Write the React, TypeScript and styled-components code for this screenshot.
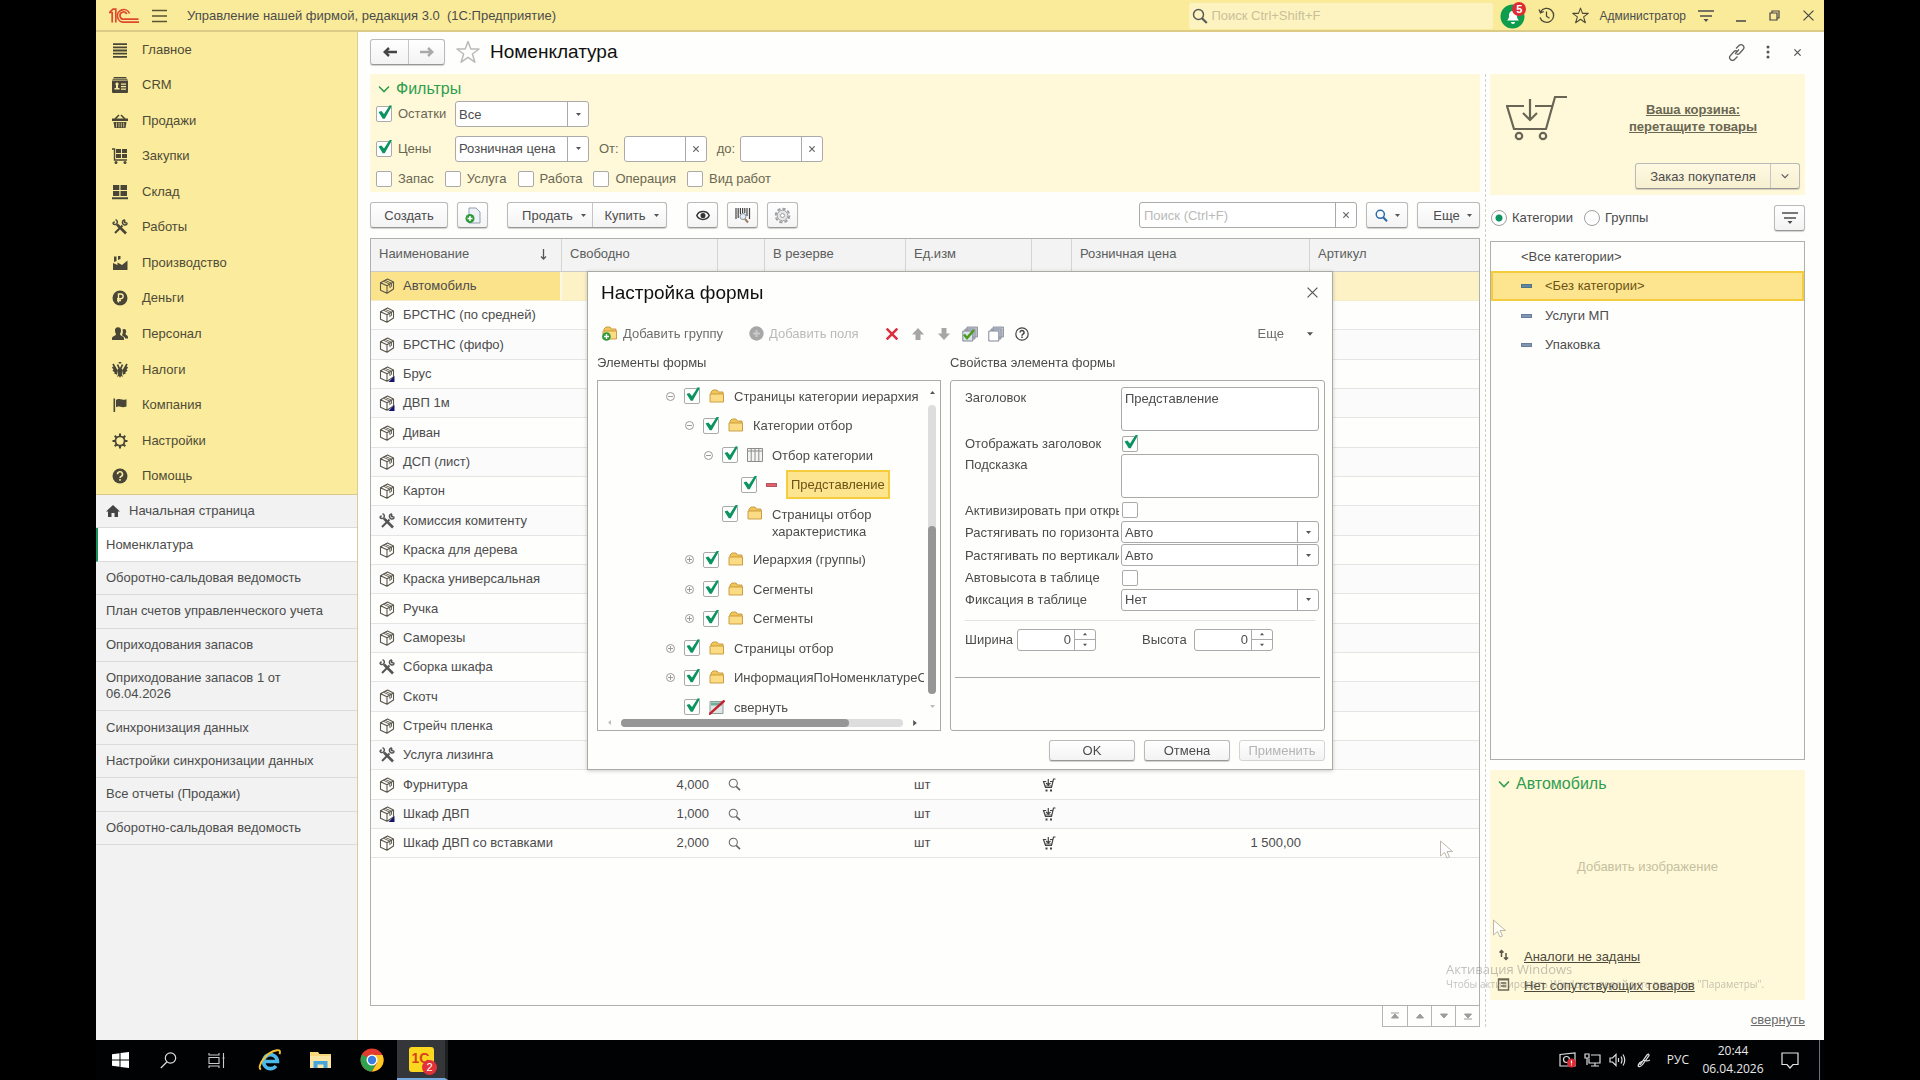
import React from 'react';
import styled, { createGlobalStyle, css } from 'styled-components';

const GlobalStyle = createGlobalStyle`
  *, *::before, *::after { box-sizing: border-box; }
  html, body { margin: 0; background: #000; }
  body, button, input, select, textarea {
    font-family: "Liberation Sans", Arial, sans-serif;
    font-size: 13px;
    color: #4c4c4c;
  }
  svg { display: block; flex: none; }
`;

/* ---------- shell ---------- */

const Screen = styled.div`
  min-height: 100vh;
  padding: 0 5%;
  background: #000;
  display: flex;
  flex-direction: column;
  line-height: 16px;
`;

const TitleBar = styled.header`
  height: 32px;
  display: flex;
  align-items: center;
  background: #faeb9a;
  border-bottom: 2px solid #dccb86;
  padding: 1px 10px 0 13px;
`;

const PlainButton = styled.button`
  border: 0;
  padding: 0;
  background: transparent;
  display: inline-flex;
  align-items: center;
  justify-content: center;
`;

const BurgerButton = styled(PlainButton)`
  margin: 0 20px 0 13px;
`;

const AppTitle = styled.div`
  flex: 1;
  white-space: pre;
`;

const GlobalSearch = styled.label`
  width: 304px;
  height: 26px;
  display: flex;
  align-items: center;
  gap: 3px;
  padding-left: 3px;
  background: #fdf3c0;
  border-radius: 3px;
  input {
    flex: 1;
    min-width: 0;
    border: 0;
    padding: 0;
    background: transparent;
    outline: 0;
  }
  input::placeholder { color: #c9c09a; }
`;

const TitleActions = styled.div`
  display: flex;
  align-items: center;
  margin-left: 6px;
`;

const BellButton = styled(PlainButton)`
  position: relative;
  width: 27px;
  height: 28px;
`;

const BellBadge = styled.span`
  position: absolute;
  top: 0;
  right: 0;
  width: 14px;
  height: 14px;
  border-radius: 50%;
  background: #dd2c33;
  color: #fff;
  font-size: 11px;
  font-weight: bold;
  line-height: 14px;
  text-align: center;
`;

const UserName = styled.span`
  font-size: 12px;
  margin: 0 12px 0 10px;
`;

const Spaced = styled.span<{ $gap: number }>`
  margin-left: ${p => p.$gap}px;
  display: inline-flex;
`;

const Body = styled.div`
  flex: 1;
  display: flex;
  background: #fefefd;
`;

/* ---------- sidebar ---------- */

const Sidebar = styled.aside`
  width: 262px;
  flex: none;
  display: flex;
  flex-direction: column;
  background: #f1f2f1;
  border-right: 1px solid #dbcb9a;
`;

const Sections = styled.nav`
  height: 463px;
  display: flex;
  flex-direction: column;
  background: #faec9c;
  border-bottom: 1px solid #d9ca8c;
`;

const SectionLink = styled.a`
  flex: 1;
  display: flex;
  align-items: center;
  gap: 14px;
  padding-left: 16px;
  color: #4f4a38;
  text-decoration: none;
`;

const OpenPages = styled.nav`
  height: 350px;
  display: flex;
  flex-direction: column;
`;

const PageLink = styled.a<{ $active?: boolean }>`
  flex: 1 0 auto;
  display: flex;
  align-items: center;
  gap: 9px;
  padding: 8px 60px 8px 10px;
  line-height: 16px;
  color: #4c4c4c;
  text-decoration: none;
  border-bottom: 1px solid #d9dad9;
  ${p => p.$active && css`
    background: #fff;
    padding-left: 8px;
    border-left: 2px solid #16915a;
  `}
  &:not(:nth-child(6)) { white-space: nowrap; padding-right: 0; }
`;

/* ---------- content ---------- */

const Main = styled.main`
  flex: 1;
  min-width: 0;
  display: flex;
  flex-direction: column;
  padding: 0 19px 13px 12px;
`;

const PageHeader = styled.div`
  height: 42px;
  padding-bottom: 2px;
  display: flex;
  align-items: center;
`;

const raised = css`
  border: 1px solid #b9bab9;
  border-bottom-color: #969896;
  border-radius: 3px;
  background: linear-gradient(#ffffff, #f3f3f3);
  box-shadow: 0 1px 1px rgba(0, 0, 0, 0.18);
`;

const SplitGroup = styled.div`
  ${raised}
  display: flex;
  height: 26px;
  > * + * { border-left: 1px solid #c4c5c4; }
`;

const SplitButton = styled(PlainButton)<{ $width: number; $inset?: number }>`
  width: ${p => p.$width}px;
  padding-left: ${p => p.$inset ?? 0}px;
  gap: 8px;
`;

const PageTitle = styled.h1`
  flex: 1;
  margin: 0 0 0 10px;
  font-size: 19px;
  line-height: 24px;
  font-weight: normal;
  color: #111;
`;

const HeaderTools = styled.div`
  display: flex;
  align-items: center;
  gap: 14px;
`;

const Columns = styled.div`
  flex: 1;
  display: flex;
`;

const ListColumn = styled.section`
  flex: 1;
  min-width: 0;
  display: flex;
  flex-direction: column;
`;

const Filters = styled.div`
  min-height: 118px;
  padding: 6px 6px 0;
  background: #fff9da;
  display: flex;
  flex-direction: column;
`;

const GroupTitle = styled(PlainButton)`
  align-self: flex-start;
  gap: 6px;
  height: 18px;
  padding-left: 2px;
  font-size: 16px;
  color: #2f9e4f;
`;

const FilterRow = styled.div<{ $height: number; $gap?: number }>`
  height: ${p => p.$height}px;
  display: flex;
  align-items: center;
  gap: ${p => p.$gap ?? 0}px;
`;

const CheckLabel = styled.label<{ $width?: number }>`
  display: inline-flex;
  align-items: center;
  gap: 6px;
  width: ${p => (p.$width ? `${p.$width}px` : 'auto')};
  color: #6a6752;
`;

const Check = styled.input.attrs({ type: 'checkbox' })`
  appearance: none;
  position: relative;
  flex: none;
  width: 16px;
  height: 16px;
  margin: 0;
  border: 1px solid #a9aaa9;
  border-radius: 2px;
  background: #fff;
  &:checked::after {
    content: '';
    position: absolute;
    left: 1px;
    top: -2px;
    width: 14px;
    height: 14px;
    background: #0b9460;
    clip-path: polygon(4% 50%, 24% 42%, 43% 64%, 84% 2%, 100% 6%, 48% 98%, 34% 98%);
  }
`;

const Field = styled.div<{ $width?: number; $height?: number }>`
  display: flex;
  width: ${p => (p.$width ? `${p.$width}px` : '100%')};
  height: ${p => p.$height ?? 26}px;
  border: 1px solid #a9aaa9;
  border-radius: 3px;
  background: #fff;
  overflow: hidden;
  select, input {
    appearance: none;
    flex: 1;
    min-width: 0;
    border: 0;
    padding: 0 4px;
    background: transparent;
    outline: 0;
  }
  select { padding: 0 3px; }
  input::placeholder { color: #b9bab9; }
`;

const FieldEnd = styled.span`
  width: 21px;
  display: flex;
  align-items: center;
  justify-content: center;
  border-left: 1px solid #a9aaa9;
`;

const FieldClear = styled(PlainButton)`
  width: 21px;
  border-left: 1px solid #a9aaa9;
`;

const RangeLabel = styled.label`
  padding: 0 5px 0 10px;
  color: #6a6752;
`;

const Toolbar = styled.div`
  display: flex;
  align-items: center;
  padding: 10px 0;
`;

const Button = styled.button<{ $width: number; $height?: number; $inset?: number }>`
  ${raised}
  width: ${p => p.$width}px;
  height: ${p => p.$height ?? 26}px;
  padding: 0 0 0 ${p => p.$inset ?? 0}px;
  display: inline-flex;
  align-items: center;
  justify-content: center;
  gap: 7px;
  flex: none;
  &:disabled { color: #b3b4b3; border-color: #d3d4d3; box-shadow: none; }
`;

const Gap = styled.div<{ $size?: number }>`
  ${p => (p.$size ? `width: ${p.$size}px;` : 'flex: 1;')}
`;

const GridBox = styled.div`
  flex: 1;
  border: 1px solid #aeb0ae;
  background: #fefefd;
`;

const Grid = styled.table`
  width: 100%;
  table-layout: fixed;
  border-collapse: separate;
  border-spacing: 0;
  th {
    height: 33px;
    padding: 0 0 2px 8px;
    background: #f2f3f2;
    border-right: 1px solid #d3d5d3;
    border-bottom: 1px solid #c9cbc9;
    text-align: left;
    font-weight: normal;
    color: #5c5d5c;
  }
  th:last-child { border-right: 0; }
  td {
    height: 29px;
    padding: 0 8px;
    border-bottom: 1px solid #e4e6e4;
    white-space: nowrap;
  }
  tbody tr:nth-child(3n) td { height: 30px; }
  tbody tr:nth-child(odd) td { background: #fafbfa; }
  tbody tr:first-child td { background: #fdf1c6; border-bottom-color: #f4eccb; }
  tbody tr:first-child td:first-child { background: #fbe38b; border-right: 2px solid #fef8e0; }
`;

const HeadSort = styled.span`
  display: flex;
  justify-content: space-between;
  align-items: center;
  padding-right: 14px;
`;

const NameCell = styled.span`
  display: flex;
  align-items: center;
  gap: 8px;
`;

const NumberCell = styled.td`
  && { padding-right: 9px; }
  text-align: right;
`;

const IconCell = styled.td`
  && { padding-left: 10px; }
`;

const GridPager = styled.div`
  align-self: flex-end;
  display: flex;
  border: 1px solid #b4b6b4;
  border-top: 0;
  button { width: 24px; height: 20px; }
  button + button { border-left: 1px solid #b4b6b4; }
`;

const Divider = styled.div`
  width: 10px;
  flex: none;
  display: flex;
  justify-content: center;
  &::before { content: ''; border-left: 1px dashed #cfd1cf; }
`;

/* ---------- right column ---------- */

const SideColumn = styled.section`
  width: 315px;
  flex: none;
  display: flex;
  flex-direction: column;
`;

const Basket = styled.div`
  height: 121px;
  padding: 21px 5px 6px 16px;
  background: #fff9da;
  display: grid;
  grid-template-columns: 64px 1fr;
  grid-template-rows: 1fr 26px;
`;

const BasketLink = styled.a`
  justify-self: center;
  padding: 6px 0 0 16px;
  color: #6a6752;
  font-weight: bold;
  line-height: 17px;
  text-align: center;
`;

const BasketOrder = styled(SplitGroup)`
  grid-column: 2;
  justify-self: end;
  background: linear-gradient(#fff9e2, #f6efd0);
`;

const ModeRow = styled.div`
  display: flex;
  align-items: center;
  gap: 10px;
  padding: 10px 0;
`;

const RadioLabel = styled.label`
  display: inline-flex;
  align-items: center;
  gap: 5px;
`;

const Radio = styled.input.attrs({ type: 'radio' })`
  appearance: none;
  width: 16px;
  height: 16px;
  margin: 0 0 0 1px;
  border: 1px solid #9d9f9d;
  border-radius: 50%;
  background: #fff;
  &:checked { background: radial-gradient(circle, #0b9460 0 3px, #fff 4px); }
`;

const CategoryList = styled.ul`
  flex: 1;
  margin: 0 0 10px;
  padding: 0;
  list-style: none;
  border: 1px solid #aeb0ae;
`;

const Category = styled.li<{ $selected?: boolean }>`
  height: 29px;
  display: flex;
  align-items: center;
  gap: 13px;
  padding-left: 30px;
  ${p => p.$selected && css`
    height: 30px;
    padding-left: 28px;
    border: 2px solid #f4cc3c;
    background: #fce58e;
    color: #6b5316;
  `}
`;

const Dash = styled.span<{ $color: string }>`
  width: 11px;
  height: 4px;
  background: ${p => p.$color};
  border: 1px solid rgba(40, 50, 70, 0.25);
`;

const ItemCard = styled.div`
  height: 230px;
  padding: 5px 6px 0;
  background: #fff9da;
  display: flex;
  flex-direction: column;
`;

const AddImage = styled(PlainButton)`
  flex: 1;
  color: #c6c0a0;
`;

const CardLinks = styled.div`
  display: flex;
  flex-direction: column;
  padding-top: 2px;
`;

const CardLinkRow = styled.div`
  height: 29px;
  display: flex;
  align-items: center;
  gap: 12px;
  a { color: #4c483a; }
`;

const Collapse = styled.a`
  align-self: flex-end;
  padding-top: 12px;
  line-height: 15px;
  color: #6a6a6a;
`;

/* ---------- dialog ---------- */

const Overlay = styled.div`
  position: fixed;
  inset: 0 0 40px;
  display: flex;
  align-items: center;
  justify-content: center;
`;

const Dialog = styled.div`
  width: 746px;
  padding: 0 7px 8px 9px;
  background: #fefefd;
  border: 1px solid #a9aba5;
  box-shadow: 0 1px 4px rgba(0, 0, 0, 0.2);
  display: flex;
  flex-direction: column;
`;

const DialogHead = styled.div`
  height: 42px;
  padding: 0 7px 0 4px;
  display: flex;
  align-items: center;
  justify-content: space-between;
  h2 {
    margin: 0;
    font-size: 19px;
    line-height: 24px;
    font-weight: normal;
    color: #111;
  }
`;

const DialogTools = styled.div`
  height: 40px;
  padding: 0 12px 0 5px;
  display: flex;
  align-items: center;
`;

const ToolText = styled(PlainButton)`
  gap: 5px;
  color: #6c6d6c;
  &:disabled { color: #b9bab9; }
`;

const ToolIcons = styled.div`
  display: grid;
  grid-template-columns: repeat(6, 26px);
  align-items: center;
  margin-left: 20px;
`;

const DialogPanes = styled.div`
  display: grid;
  grid-template-columns: 344px 1fr;
  grid-template-rows: 26px 351px;
  column-gap: 9px;
`;

const PaneTitle = styled.div`
  padding-top: 1px;
  line-height: 16px;
`;

const TreeBox = styled.div`
  border: 1px solid #a9aba9;
  display: grid;
  grid-template-columns: 1fr 16px;
  grid-template-rows: 1fr 14px;
  overflow: hidden;
`;

const TreeRows = styled.ul`
  min-width: 0;
  margin: 0;
  padding: 1px 0 0;
  list-style: none;
  overflow: hidden;
`;

const TreeRow = styled.li<{ $level: number; $tall?: boolean }>`
  height: ${p => (p.$tall ? 45 : 29)}px;
  padding-left: ${p => 68 + p.$level * 19}px;
  display: flex;
  align-items: ${p => (p.$tall ? 'flex-start' : 'center')};
  padding-top: ${p => (p.$tall ? 6 : 0)}px;
  &:nth-child(2n) { height: 30px; }
`;

const Expander = styled.span`
  flex: none;
  width: 18px;
  display: flex;
`;

const TreeIcon = styled.span`
  flex: none;
  width: 25px;
  margin-left: 9px;
  display: flex;
  align-items: center;
`;

const TreeText = styled.span<{ $selected?: boolean; $wrap?: boolean }>`
  white-space: ${p => (p.$wrap ? 'normal' : 'nowrap')};
  width: ${p => (p.$wrap ? '120px' : 'auto')};
  line-height: 17px;
  ${p => p.$selected && css`
    margin-left: -5px;
    padding: 4px 3px;
    border: 2px solid #f4cc3c;
    background: #fce58e;
    color: #6b5316;
  `}
`;

const VScroll = styled.div`
  display: flex;
  flex-direction: column;
  align-items: center;
  justify-content: space-between;
  padding: 9px 0 7px;
`;

const VTrack = styled.div`
  width: 8px;
  height: 289px;
  border-radius: 4px;
  background: #dcdddc;
  display: flex;
  align-items: flex-end;
`;

const VThumb = styled.div`
  width: 8px;
  height: 168px;
  border-radius: 4px;
  background: #959695;
`;

const HScroll = styled.div`
  display: flex;
  align-items: center;
  gap: 9px;
  padding-left: 9px;
`;

const HTrack = styled.div`
  width: 282px;
  height: 8px;
  border-radius: 4px;
  background: #dcdddc;
`;

const HThumb = styled.div`
  width: 228px;
  height: 8px;
  border-radius: 4px;
  background: #959695;
`;

const PropsBox = styled.div`
  border: 1px solid #a9aba9;
  border-radius: 3px;
  padding: 6px 4px 0 14px;
`;

const PropRow = styled.div<{ $height: number; $top?: boolean }>`
  height: ${p => p.$height}px;
  display: grid;
  grid-template-columns: 154px 198px;
  column-gap: 2px;
  align-items: ${p => (p.$top ? 'start' : 'center')};
  label {
    overflow: hidden;
    white-space: nowrap;
    padding-top: ${p => (p.$top ? 3 : 0)}px;
  }
  input[type='checkbox'] { margin-left: 1px; }
`;

const Memo = styled.textarea`
  display: block;
  width: 100%;
  height: 44px;
  padding: 2px 3px;
  resize: none;
  border: 1px solid #a9aaa9;
  border-radius: 3px;
  background: #fff;
  line-height: 18px;
  outline: 0;
`;

const SizeRow = styled.div`
  display: flex;
  align-items: center;
  width: 350px;
  margin-top: 9px;
  padding-top: 8px;
  border-top: 1px solid #e3e4e3;
  input { text-align: right; padding-right: 3px; }
`;

const SizeLabel = styled.label<{ $before?: number }>`
  width: 52px;
  margin-left: ${p => p.$before ?? 0}px;
`;

const Stepper = styled.span`
  width: 21px;
  display: flex;
  flex-direction: column;
  border-left: 1px solid #a9aaa9;
  button { flex: 1; }
  button + button { border-top: 1px solid #a9aaa9; }
`;

const PropsRule = styled.div`
  margin: 26px 0 0 -10px;
  border-top: 1px solid #a9aba9;
`;

const DialogButtons = styled.div`
  display: flex;
  justify-content: flex-end;
  gap: 9px;
  padding: 9px 0 0;
`;

/* ---------- overlays of the desktop ---------- */

const Watermark = styled.div`
  position: fixed;
  right: 170px;
  bottom: 90px;
  width: 304px;
  color: rgba(110, 110, 110, 0.42);
  font-family: "Open Sans", "Noto Sans", sans-serif;
  pointer-events: none;
  div { font-size: 13px; line-height: 18px; }
  p { margin: 0; font-size: 10px; line-height: 12px; white-space: nowrap; }
`;

const Pointer = styled.svg<{ $x: number; $y: number }>`
  position: fixed;
  left: ${p => p.$x}px;
  top: ${p => p.$y}px;
`;

/* ---------- taskbar ---------- */

const Taskbar = styled.footer`
  height: 40px;
  display: flex;
  align-items: center;
  background: #000204;
  color: #e8e8e8;
  font-family: "Open Sans", "Noto Sans", sans-serif;
  padding-right: 4px;
`;

const TaskButton = styled(PlainButton)<{ $active?: boolean; $system?: boolean }>`
  width: ${p => (p.$system ? 48 : 51)}px;
  height: 40px;
  position: relative;
  ${p => p.$active && css`
    background: #34363a;
    border-bottom: 2px solid #76a9dc;
    border-right: 3px solid #1c1e20;
  `}
`;

const AppTile = styled.span`
  width: 25px;
  height: 25px;
  border-radius: 3px;
  background: #fbd81f;
  color: #d8401c;
  font-size: 14px;
  font-weight: bold;
  line-height: 22px;
  text-align: left;
  padding-left: 3px;
`;

const TileBadge = styled.span`
  position: absolute;
  right: 8px;
  bottom: 3px;
  width: 15px;
  height: 15px;
  border-radius: 50%;
  background: #e03238;
  color: #fff;
  font-size: 11px;
  line-height: 15px;
`;

const Tray = styled.div`
  margin-left: auto;
  display: flex;
  align-items: center;
  gap: 8px;
`;

const Lang = styled.span`
  font-size: 12px;
  margin: 0 5px 0 6px;
`;

const Clock = styled.div`
  width: 62px;
  font-size: 12px;
  line-height: 18px;
  text-align: center;
`;

const PeekEdge = styled.span`
  height: 40px;
  margin-left: 12px;
  border-left: 1px solid #6f7275;
`;

/* ---------- icons ---------- */

const Logo = () => (
  <svg width="30" height="16" viewBox="0 0 30 16" fill="none" stroke="#dd4a2e" strokeWidth="1.7">
    <path d="M0 4.5H3.200V14.500M0.500 4.500 4 1.200H6.800V14.500" />
    <path d="M20.500 5.500A6.300 6.300 0 1 0 15 14.200H30" />
    <path d="M17.800 6A3.600 3.600 0 1 0 15 11.200H29.500" />
  </svg>
);

const Burger = () => (
  <svg width="15" height="14" viewBox="0 0 15 14" stroke="#5b5336" strokeWidth="1.3">
    <path d="M0 1.5h15M0 7h15M0 12.5h15" />
  </svg>
);

const Lens = ({ size = 16, color = '#5a5a5a', width = 1.5 }: { size?: number; color?: string; width?: number }) => (
  <svg width={size} height={size} viewBox="0 0 16 16" fill="none" stroke={color} strokeWidth={width}>
    <circle cx="6.5" cy="6.5" r="5" />
    <path d="M10 10.3 14.8 15" strokeWidth={width + 0.8} />
  </svg>
);

const Arrow = ({ dir = 'down', color = '#555', size = 5 }: { dir?: 'up' | 'down' | 'left' | 'right'; color?: string; size?: number }) => {
  const d = {
    down: 'M0 2h10L5 8z',
    up: 'M0 8h10L5 2z',
    left: 'M8 0v10L2 5z',
    right: 'M2 0v10l6-5z',
  }[dir];
  return <svg width={size} height={size} viewBox="0 0 10 10"><path d={d} fill={color} /></svg>;
};

const Cross = ({ size = 6, color = '#666', width = 1.2 }: { size?: number; color?: string; width?: number }) => (
  <svg width={size} height={size} viewBox="0 0 10 10" stroke={color} strokeWidth={(width * 10) / size}>
    <path d="M0.5 0.5 9.5 9.5M9.5 0.5 0.5 9.5" />
  </svg>
);

const Chevron = ({ color = '#2f9e4f', size = 12 }: { color?: string; size?: number }) => (
  <svg width={size} height={size} viewBox="0 0 12 12" fill="none" stroke={color} strokeWidth="1.6">
    <path d="M1 3.5 6 8.5 11 3.5" />
  </svg>
);

const Star = ({ size, color }: { size: number; color: string }) => (
  <svg width={size} height={size} viewBox="0 0 24 24" fill="none" stroke={color} strokeWidth="1.5" strokeLinejoin="round">
    <path d="M12 1.5 14.8 9H23l-6.6 5 2.5 8.2L12 17.3l-6.9 4.9L7.6 14 1 9h8.2z" />
  </svg>
);

const MenuLines = ({ color = '#4c4c4c' }: { color?: string }) => (
  <svg width="16" height="14" viewBox="0 0 16 14">
    <path d="M0 2h16M2 7h12" stroke={color} strokeWidth="1.4" />
    <path d="M5.500 10h5L8 13z" fill={color} />
  </svg>
);

const Tools = ({ color = '#4a4637' }: { color?: string }) => (
  <svg width="16" height="16" viewBox="0 0 16 16" fill="none" stroke={color}>
    <path d="M5 5.500 14 14.500" strokeWidth="2.600" />
    <path d="M10.500 6.500 3 14" strokeWidth="2" />
    <path d="M3.500.8A2.400 2.400 0 1 1 .8 4.200M2.600 2.600.8 4.200" strokeWidth="1.500" />
    <path d="M13 1a2.500 2.500 0 1 0 2.300 3.200M13 1l-.5 2.500 2.800.7" strokeWidth="1.400" />
  </svg>
);

const sectionIcons: Record<string, React.ReactNode> = {
  main: <path d="M1 1.200h14v1.800H1zM1 4.400h14v1.800H1zM1 7.600h14v1.800H1zM1 10.800h14v1.800H1zM1 14h14v1.800H1z" />,
  crm: (
    <>
      <path d="M2 0h12l1 1.500H1zM.5 2h15v.8H.5zM0 3.500h16V15a1 1 0 0 1-1 1H1a1 1 0 0 1-1-1z" />
      <path d="M5 5.500a1.600 1.600 0 0 1 1 2.800V11h1.500v1.500h-5V11H4V8.300A1.600 1.600 0 0 1 5 5.500M9 6.500h5v1.300H9zM9 9h5v1.300H9zM9 11.500h5v1.300H9z" fill="#faec9c" />
    </>
  ),
  sales: (
    <>
      <path d="M0 5.500h16V8H0zM1.500 9h13l-1 6h-11z" />
      <path d="M3 6 7 2M13 6 9 2" stroke="#4a4637" strokeWidth="1.600" />
      <path d="M4.500 9.500v5M7 9.500v5M9.300 9.500v5M11.700 9.500v5" stroke="#faec9c" strokeWidth=".7" />
    </>
  ),
  buy: (
    <>
      <path d="M4 1h5v4H4zM10 1h5v4h-5zM4 6h5v4H4zM10 6h5v4h-5z" />
      <path d="M0 1h2.500v11H15" fill="none" stroke="#4a4637" strokeWidth="1.400" />
      <circle cx="4" cy="14.500" r="1.500" /><circle cx="13" cy="14.500" r="1.500" />
    </>
  ),
  stock: <path d="M1 1h6.300v5H1zM8.500 1H15v5H8.500zM1 7h6.300v5H1zM8.500 7H15v5H8.500zM0 13.300h16v2H0z" />,
  make: <path d="M1 15V8l4.500 2V7.500L10 10l5.500-4.500V15zM2 1.500h2.500V6L2 7zM6 1h2.500v3L6 5z" />,
  money: (
    <>
      <circle cx="8" cy="8" r="7.500" />
      <path d="M6.500 12.500V4h2.300a2.300 2.300 0 0 1 0 4.700H5M5 10.500h4" fill="none" stroke="#faec9c" strokeWidth="1.400" />
    </>
  ),
  staff: <path d="M6 1.200c2.200 0 3.200 1.600 3 3.700-.1 1.500-.8 2.300-1 3.300.1 1.500 4 2 4 4V14H0v-1.800c0-2 3.900-2.500 4-4-.2-1-.9-1.800-1-3.300C2.800 2.800 3.800 1.200 6 1.200M12 3c1.600 0 2.300 1.200 2.200 2.700-.1 1-.7 1.700-.7 2.400.1 1 2.500 1.400 2.500 2.900v1.500h-2.700C13 10.500 10.400 10 10 9c1-1.500 1-4 .5-5.500.4-.3.900-.5 1.500-.5" />,
  tax: (
    <>
      <path d="M7 5.500h2l2 3-1.200 3.500L11 15l-2-1-1 2-1-2-2 1 1.200-3L5 8.500zM6.500 0h3L9 1.500h-2z" />
      <path d="M7 6 5.500 2.500M9 6l1.500-3.500M5 9 1 2M4.800 10 .5 5M5 11 1 8M5.200 12 2.500 10.800M11 9l4-7M11.200 10l4.300-5M11 11l4-3M10.800 12l2.700-1.200" stroke="#4a4637" strokeWidth="1.700" />
    </>
  ),
  firm: <path d="M1.500 1.500h1.600V15H1.500zM4 3c3-2.500 5 1 10.500-.8v7.300C9 11.500 7 8 4 10.200z" />,
  settings: (
    <>
      <circle cx="8" cy="8" r="4.600" fill="none" stroke="#4a4637" strokeWidth="1.800" />
      <path d="M8 .5v3M8 12.500v3M.5 8h3M12.500 8h3M2.700 2.700l2 2M11.300 11.300l2 2M13.300 2.700l-2 2M4.700 11.300l-2 2" stroke="#4a4637" strokeWidth="2" />
    </>
  ),
  help: (
    <>
      <circle cx="8" cy="8" r="7.500" />
      <path d="M5.500 6.300a2.500 2.500 0 1 1 3.600 2.200c-.8.400-1.100.8-1.100 1.500M8 11v1.700" fill="none" stroke="#faec9c" strokeWidth="1.600" />
    </>
  ),
};

const SectionIcon = ({ name }: { name: string }) =>
  name === 'works' ? <Tools /> : (
    <svg width="16" height="16" viewBox="0 0 16 16" fill="#4a4637">{sectionIcons[name]}</svg>
  );

const Box = ({ marked }: { marked?: boolean }) => (
  <svg width="16" height="16" viewBox="0 0 16 16" fill="none" stroke="#5a564a" strokeWidth="1.100" strokeLinejoin="round">
    <path d="M8.500 1 14.500 4V11L8 15.300 1.500 12.200V4.800zM1.500 4.800 8 7.800 14.500 4M8 7.800V15.300" />
    <path d="M4.300 3.200 10.800 6.200V9.500L12.500 8.500V5.200L6 2.300" strokeWidth=".9" />
    {marked && <path d="M15.500 10v6h-6z" fill="#14146e" stroke="none" />}
  </svg>
);

const CartSmall = () => (
  <svg width="14" height="14" viewBox="0 0 14 14" fill="none" stroke="#444" strokeWidth="1.200">
    <path d="M13.500 1h-2L9.500 9.500h-6L1.500 3.500h2.700M8 3.500h2.500M6.300 1v5.500M4 5l2.300 2L8.500 5M3 8h6.500" />
    <path d="M3.500 11.500h2v2h-2zM8 11.500h2v2H8z" fill="#444" stroke="none" />
  </svg>
);

const CartBig = () => (
  <svg width="61" height="46" viewBox="0 0 61 46" fill="none" stroke="#6a6656" strokeWidth="2.200">
    <path d="M61 2H49L40 34H8L1 11H18M29 11H46" />
    <path d="M24 4V24M17 18 24 25 31 18" />
    <circle cx="13" cy="41" r="3.200" /><circle cx="37" cy="41" r="3.200" />
  </svg>
);

const Folder = ({ plus }: { plus?: boolean }) => (
  <svg width="16" height="15" viewBox="0 0 16 15">
    <path d="M2 4.500V3l2-2h4l1.500 2H14v9.500H2z" fill="#f0c659" stroke="#c7963a" strokeWidth=".9" />
    <path d="M1 5h13.500v8H1z" fill="#fbdb83" stroke="#c7963a" strokeWidth=".9" />
    {plus && <><circle cx="4.500" cy="10.500" r="4.300" fill="#2f9a3c" /><path d="M4.500 8v5M2 10.500h5" stroke="#fff" strokeWidth="1.400" /></>}
  </svg>
);

const TableIcon = () => (
  <svg width="16" height="14" viewBox="0 0 16 14" fill="#f3f4f3" stroke="#8b8d8b" strokeWidth="1">
    <path d="M.5.500h15v13H.5zM.5 3h15M4.200.500v13M8 .5v13M11.800.500v13" />
  </svg>
);

const HiddenIcon = () => (
  <svg width="16" height="15" viewBox="0 0 16 15">
    <path d="M1 1.500h13v12H1z" fill="#dfe6e4" stroke="#8c9a9a" />
    <path d="M2 2.500h11v3H2z" fill="#6fae9a" />
    <path d="M0 14.500 15.500.500" stroke="#c4202e" strokeWidth="2.400" />
  </svg>
);

const Toggle = ({ open }: { open: boolean }) => (
  <svg width="9" height="9" viewBox="0 0 9 9" fill="none" stroke="#9a9b9a" strokeWidth="1">
    <circle cx="4.500" cy="4.500" r="4" />
    <path d={open ? 'M2 4.500h5' : 'M2 4.500h5M4.500 2v5'} />
  </svg>
);

const Stack = ({ checked }: { checked?: boolean }) => (
  <svg width="16" height="16" viewBox="0 0 16 16">
    <path d="M5 1h10.500v10H5zM3 3h10v10H3z" fill="#b9c0cc" stroke="#8c929e" strokeWidth=".9" />
    <path d="M.8 5h10v10H.8z" fill={checked ? '#d9e4e6' : '#fff'} stroke="#80869a" />
    {checked && <path d="M2 8.500 5 12 12 4" fill="none" stroke="#4d9a20" strokeWidth="2.600" />}
  </svg>
);

const FatArrow = ({ up }: { up?: boolean }) => (
  <svg width="12" height="12" viewBox="0 0 12 12" fill="#a5a6a5">
    <path d={up ? 'M6 0 12 6.500H8.500V12h-5V6.500H0z' : 'M6 12 0 5.500h3.500V0h5v5.500H12z'} />
  </svg>
);

const NavArrow = ({ color, flip }: { color: string; flip?: boolean }) => (
  <svg width="14" height="10" viewBox="0 0 14 10" fill="none" stroke={color} strokeWidth="2.400">
    <path d={flip ? 'M0 5h12M8 1 12.300 5 8 9' : 'M14 5H2M6 1 1.700 5 6 9'} />
  </svg>
);

const PagerIcon = ({ d }: { d: string }) => (
  <svg width="10" height="8" viewBox="0 0 10 8" fill="#9b9d9b" stroke="#9b9d9b"><path d={d} /></svg>
);

/* ---------- data ---------- */

const sections: [string, string][] = [
  ['main', 'Главное'], ['crm', 'CRM'], ['sales', 'Продажи'], ['buy', 'Закупки'], ['stock', 'Склад'],
  ['works', 'Работы'], ['make', 'Производство'], ['money', 'Деньги'], ['staff', 'Персонал'],
  ['tax', 'Налоги'], ['firm', 'Компания'], ['settings', 'Настройки'], ['help', 'Помощь'],
];

const pages = [
  'Начальная страница', 'Номенклатура', 'Оборотно-сальдовая ведомость', 'План счетов управленческого учета',
  'Оприходования запасов', 'Оприходование запасов 1 от 06.04.2026', 'Синхронизация данных',
  'Настройки синхронизации данных', 'Все отчеты (Продажи)', 'Оборотно-сальдовая ведомость',
];

type Item = { name: string; kind?: 'service' | 'marked'; free?: string; price?: string };

const items: Item[] = [
  { name: 'Автомобиль' }, { name: 'БРСТНС (по средней)' }, { name: 'БРСТНС (фифо)' },
  { name: 'Брус', kind: 'marked' }, { name: 'ДВП 1м', kind: 'marked' }, { name: 'Диван' },
  { name: 'ДСП (лист)' }, { name: 'Картон' }, { name: 'Комиссия комитенту', kind: 'service' },
  { name: 'Краска для дерева' }, { name: 'Краска универсальная' }, { name: 'Ручка' }, { name: 'Саморезы' },
  { name: 'Сборка шкафа', kind: 'service' }, { name: 'Скотч' }, { name: 'Стрейч пленка' },
  { name: 'Услуга лизинга', kind: 'service' }, { name: 'Фурнитура', free: '4,000' },
  { name: 'Шкаф ДВП', kind: 'marked', free: '1,000' },
  { name: 'Шкаф ДВП со вставками', free: '2,000', price: '1 500,00' },
];

type Node = { text: string; level: number; open?: boolean; icon?: 'folder' | 'table' | 'field' | 'hidden'; selected?: boolean; wrap?: boolean };

const nodes: Node[] = [
  { text: 'Страницы категории иерархия', level: 0, open: true },
  { text: 'Категории отбор', level: 1, open: true },
  { text: 'Отбор категории', level: 2, open: true, icon: 'table' },
  { text: 'Представление', level: 3, icon: 'field', selected: true },
  { text: 'Страницы отбор характеристика', level: 2, wrap: true },
  { text: 'Иерархия (группы)', level: 1, open: false },
  { text: 'Сегменты', level: 1, open: false },
  { text: 'Сегменты', level: 1, open: false },
  { text: 'Страницы отбор', level: 0, open: false },
  { text: 'ИнформацияПоНоменклатуреОбщая', level: 0, open: false },
  { text: 'свернуть', level: 0, icon: 'hidden' },
];

/* ---------- composite parts ---------- */

const Combo = ({ id, value, width, height }: { id: string; value: string; width?: number; height?: number }) => (
  <Field $width={width} $height={height}>
    <select id={id} defaultValue={value} aria-label={value}><option>{value}</option></select>
    <FieldEnd><Arrow /></FieldEnd>
  </Field>
);

const RangeInput = ({ id }: { id: string }) => (
  <Field $width={83}>
    <input id={id} />
    <FieldClear aria-label="Очистить"><Cross /></FieldClear>
  </Field>
);

const NumberField = ({ id }: { id: string }) => (
  <Field $width={79} $height={22}>
    <input id={id} defaultValue="0" />
    <Stepper>
      <PlainButton aria-label="Больше"><Arrow dir="up" size={4} /></PlainButton>
      <PlainButton aria-label="Меньше"><Arrow size={4} /></PlainButton>
    </Stepper>
  </Field>
);

const TreeGlyph = ({ icon }: { icon?: Node['icon'] }) => {
  if (icon === 'table') return <TableIcon />;
  if (icon === 'field') return <Dash $color="#e2626c" />;
  if (icon === 'hidden') return <HiddenIcon />;
  return <Folder />;
};

const FormDialog = () => (
  <Overlay>
    <Dialog role="dialog" aria-label="Настройка формы">
      <DialogHead>
        <h2>Настройка формы</h2>
        <PlainButton aria-label="Закрыть"><Cross size={11} color="#555" width={1.2} /></PlainButton>
      </DialogHead>
      <DialogTools>
        <ToolText><Folder plus />Добавить группу</ToolText>
        <Gap $size={26} />
        <ToolText disabled>
          <svg width="15" height="15" viewBox="0 0 15 15"><circle cx="7.500" cy="7.500" r="7.200" fill="#a6a7a6" /><path d="M7.500 4v7M4 7.500h7" stroke="#c9cac9" strokeWidth="2" /></svg>
          Добавить поля
        </ToolText>
        <ToolIcons>
          <PlainButton aria-label="Удалить"><Cross size={12} color="#dc3040" width={2.6} /></PlainButton>
          <PlainButton aria-label="Вверх"><FatArrow up /></PlainButton>
          <PlainButton aria-label="Вниз"><FatArrow /></PlainButton>
          <PlainButton aria-label="Установить все"><Stack checked /></PlainButton>
          <PlainButton aria-label="Снять все"><Stack /></PlainButton>
          <PlainButton aria-label="Справка">
            <svg width="14" height="14" viewBox="0 0 14 14" fill="none" stroke="#444" strokeWidth="1.200"><circle cx="7" cy="7" r="6.200" /><path d="M5 5.500a2 2 0 1 1 3 1.700c-.8.500-1 .8-1 1.500M7 9.500V11" strokeWidth="1.500" /></svg>
          </PlainButton>
        </ToolIcons>
        <Gap />
        <ToolText>Еще<Gap $size={13} /><Arrow size={6} /></ToolText>
      </DialogTools>
      <DialogPanes>
        <PaneTitle>Элементы формы</PaneTitle>
        <PaneTitle>Свойства элемента формы</PaneTitle>
        <TreeBox>
          <TreeRows>
            {nodes.map((n, i) => (
              <TreeRow key={i} $level={n.level} $tall={n.wrap}>
                <Expander>{n.open !== undefined && <Toggle open={n.open} />}</Expander>
                <Check defaultChecked aria-label={n.text} />
                <TreeIcon><TreeGlyph icon={n.icon} /></TreeIcon>
                <TreeText $selected={n.selected} $wrap={n.wrap}>{n.text}</TreeText>
              </TreeRow>
            ))}
          </TreeRows>
          <VScroll>
            <Arrow dir="up" />
            <VTrack><VThumb /></VTrack>
            <Arrow color="#bbb" />
          </VScroll>
          <HScroll>
            <Arrow dir="left" color="#bbb" />
            <HTrack><HThumb /></HTrack>
            <Arrow dir="right" size={6} />
          </HScroll>
        </TreeBox>
        <PropsBox>
          <PropRow $height={47} $top><label htmlFor="caption">Заголовок</label><Memo id="caption" defaultValue="Представление" /></PropRow>
          <PropRow $height={20}><label htmlFor="showCaption">Отображать заголовок</label><Check id="showCaption" defaultChecked /></PropRow>
          <PropRow $height={46} $top><label htmlFor="hint">Подсказка</label><Memo id="hint" /></PropRow>
          <PropRow $height={21}><label htmlFor="activate">Активизировать при открытии</label><Check id="activate" /></PropRow>
          <PropRow $height={23}><label htmlFor="stretchX">Растягивать по горизонтали</label><Combo id="stretchX" value="Авто" height={22} /></PropRow>
          <PropRow $height={23}><label htmlFor="stretchY">Растягивать по вертикали</label><Combo id="stretchY" value="Авто" height={22} /></PropRow>
          <PropRow $height={22}><label htmlFor="autoHeight">Автовысота в таблице</label><Check id="autoHeight" /></PropRow>
          <PropRow $height={22}><label htmlFor="fixed">Фиксация в таблице</label><Combo id="fixed" value="Нет" height={22} /></PropRow>
          <SizeRow>
            <SizeLabel htmlFor="width">Ширина</SizeLabel><NumberField id="width" />
            <SizeLabel $before={46} htmlFor="height">Высота</SizeLabel><NumberField id="height" />
          </SizeRow>
          <PropsRule />
        </PropsBox>
      </DialogPanes>
      <DialogButtons>
        <Button $width={86} $height={21}>OK</Button>
        <Button $width={86} $height={21}>Отмена</Button>
        <Button $width={86} $height={21} disabled>Применить</Button>
      </DialogButtons>
    </Dialog>
  </Overlay>
);

const Cursor = ({ x, y }: { x: number; y: number }) => (
  <Pointer $x={x} $y={y} width="14" height="19" viewBox="0 0 14 19" fill="rgba(255,255,255,.7)" stroke="#bcb6ac" strokeWidth="1">
    <path d="M.5 1v15l4-3.500 2.500 5.500 2.500-1L7 11.500h5.500z" />
  </Pointer>
);

const App = () => (
  <>
    <GlobalStyle />
    <Screen>
      <TitleBar>
        <Logo />
        <BurgerButton aria-label="Меню"><Burger /></BurgerButton>
        <AppTitle>Управление нашей фирмой, редакция 3.0  (1С:Предприятие)</AppTitle>
        <GlobalSearch>
          <Lens size={16} />
          <input placeholder="Поиск Ctrl+Shift+F" aria-label="Поиск" />
        </GlobalSearch>
        <TitleActions>
          <BellButton aria-label="Уведомления">
            <svg width="26" height="26" viewBox="0 0 26 26"><circle cx="12.500" cy="13.500" r="12" fill="#109c4d" /><path d="M13 8c3 0 4 2 4 5 0 2 1 3.500 2 4.500H7c1-1 2-2.500 2-4.500 0-3 1-5 4-5M11 19h4a2 2 0 0 1-4 0" fill="#fff" /></svg>
            <BellBadge>5</BellBadge>
          </BellButton>
          <Spaced $gap={12}>
            <svg width="17" height="17" viewBox="0 0 17 17" fill="none" stroke="#4c4838" strokeWidth="1.300"><path d="M2.500 5A7 7 0 1 1 2 10.500M1 2.500 2.500 5.800 5.800 4.500M8.500 4.500v4.700l3 2" /></svg>
          </Spaced>
          <Spaced $gap={17}><Star size={17} color="#4c4838" /></Spaced>
          <UserName>Администратор</UserName>
          <MenuLines />
          <Spaced $gap={22}><svg width="10" height="12" viewBox="0 0 10 12"><path d="M0 11h10" stroke="#444" strokeWidth="1.500" /></svg></Spaced>
          <Spaced $gap={23}><svg width="11" height="11" viewBox="0 0 11 11" fill="none" stroke="#444" strokeWidth="1.200"><path d="M1 3h7v7H1zM3 3V1h7v7H8" /></svg></Spaced>
          <Spaced $gap={23}><Cross size={11} color="#444" width={1.200} /></Spaced>
        </TitleActions>
      </TitleBar>

      <Body>
        <Sidebar>
          <Sections>
            {sections.map(([icon, text]) => (
              <SectionLink key={text} href="#"><SectionIcon name={icon} />{text}</SectionLink>
            ))}
          </Sections>
          <OpenPages>
            {pages.map((text, i) => (
              <PageLink key={i} href="#" $active={i === 1}>
                {i === 0 && <svg width="14" height="12" viewBox="0 0 14 12" fill="#444"><path d="M7 0 14 6.500h-2V12H8.500V8h-3v4H2V6.500H0z" /></svg>}
                {text}
              </PageLink>
            ))}
          </OpenPages>
        </Sidebar>

        <Main>
          <PageHeader>
            <SplitGroup>
              <SplitButton $width={37} aria-label="Назад"><NavArrow color="#444" /></SplitButton>
              <SplitButton $width={36} aria-label="Вперед"><NavArrow color="#a8a9a8" flip /></SplitButton>
            </SplitGroup>
            <Spaced $gap={11}><Star size={24} color="#b9bbb9" /></Spaced>
            <PageTitle>Номенклатура</PageTitle>
            <HeaderTools>
              <svg width="17" height="17" viewBox="0 0 17 17" fill="none" stroke="#5f605f" strokeWidth="1.300"><path d="M7 10 11 5.500M8 4.500l3-3a2.800 2.800 0 0 1 4 4l-3.500 4a2.800 2.800 0 0 1-3 .5M9.500 12.500l-3 3a2.800 2.800 0 0 1-4-4L6 7.500A2.800 2.800 0 0 1 9 7" /></svg>
              <svg width="18" height="14" viewBox="0 0 18 14" fill="#555"><circle cx="9" cy="2" r="1.500" /><circle cx="9" cy="7" r="1.500" /><circle cx="9" cy="12" r="1.500" /></svg>
              <Gap $size={2} />
            </HeaderTools>
            <Spaced $gap={1}><Cross size={7} color="#555" /></Spaced>
            <Gap $size={4} />
          </PageHeader>

          <Columns>
            <ListColumn>
              <Filters>
                <GroupTitle><Chevron />Фильтры</GroupTitle>
                <FilterRow $height={32}>
                  <CheckLabel $width={79}><Check defaultChecked />Остатки</CheckLabel>
                  <Combo id="stock" value="Все" width={134} />
                </FilterRow>
                <FilterRow $height={37}>
                  <CheckLabel $width={79}><Check defaultChecked />Цены</CheckLabel>
                  <Combo id="price" value="Розничная цена" width={134} />
                  <RangeLabel htmlFor="from">От:</RangeLabel><RangeInput id="from" />
                  <RangeLabel htmlFor="to">до:</RangeLabel><RangeInput id="to" />
                </FilterRow>
                <FilterRow $height={24} $gap={11}>
                  {['Запас', 'Услуга', 'Работа', 'Операция', 'Вид работ'].map(t => (
                    <CheckLabel key={t}><Check />{t}</CheckLabel>
                  ))}
                </FilterRow>
              </Filters>

              <Toolbar>
                <Button $width={78}>Создать</Button>
                <Gap $size={9} />
                <Button $width={31} aria-label="Создать копированием">
                  <svg width="16" height="17" viewBox="0 0 16 17"><path d="M4 1h7l4 4v11H4z" fill="#eef2f6" stroke="#8fa0b4" /><circle cx="5" cy="11.500" r="4.500" fill="#2f9a3c" /><path d="M5 9v5M2.500 11.500h5" stroke="#fff" strokeWidth="1.500" /></svg>
                </Button>
                <Gap $size={19} />
                <SplitGroup>
                  <SplitButton $width={84} $inset={8}>Продать<Arrow /></SplitButton>
                  <SplitButton $width={74} $inset={4}>Купить<Arrow /></SplitButton>
                </SplitGroup>
                <Gap $size={20} />
                <Button $width={31} aria-label="Просмотр">
                  <svg width="14" height="11" viewBox="0 0 14 11" fill="none" stroke="#333" strokeWidth="1.500"><path d="M.8 5.500C3 .3 11 .3 13.200 5.500 11 10.700 3 10.700.8 5.500z" /><circle cx="7" cy="5.500" r="1.800" fill="#333" /></svg>
                </Button>
                <Gap $size={9} />
                <Button $width={31} aria-label="Поиск по штрихкоду">
                  <svg width="16" height="17" viewBox="0 0 16 17" fill="none" stroke="#444"><path d="M1 1v11M3.200 1v10M5.400 1v6M7.600 1v5M9.800 1v5M12 1v8M14.500 1v11" strokeWidth="1.200" /><circle cx="8" cy="9.500" r="3" fill="#e6eef4" stroke="#8892a0" /><path d="M10 12 13 15.500" stroke="#a08060" strokeWidth="2" /></svg>
                </Button>
                <Gap $size={9} />
                <Button $width={31} aria-label="Настройки">
                  <svg width="17" height="17" viewBox="0 0 17 17" fill="none" stroke="#9ea0a2"><circle cx="8.500" cy="8.500" r="6.800" strokeWidth="2" strokeDasharray="3.300 2" /><circle cx="8.500" cy="8.500" r="5.300" fill="#e4e6e8" /><circle cx="8.500" cy="8.500" r="2" fill="#fff" /></svg>
                </Button>
                <Gap />
                <Field $width={218}>
                  <input placeholder="Поиск (Ctrl+F)" aria-label="Поиск в списке" />
                  <FieldClear aria-label="Очистить"><Cross /></FieldClear>
                </Field>
                <Gap $size={9} />
                <Button $width={42} aria-label="Найти"><Lens size={13} color="#2c6aa8" width={1.800} /><Arrow /></Button>
                <Gap $size={9} />
                <Button $width={63} $inset={8}>Еще<Arrow /></Button>
              </Toolbar>

              <GridBox>
                <Grid>
                  <colgroup>
                    {[191, 156, 47, 141, 126, 40, 238].map((w, i) => <col key={i} width={w} />)}
                    <col />
                  </colgroup>
                  <thead>
                    <tr>
                      <th><HeadSort>Наименование
                        <svg width="7" height="11" viewBox="0 0 7 11" fill="none" stroke="#555" strokeWidth="1.300"><path d="M3.500 0v10M1 7.500 3.500 10 6 7.500" /></svg>
                      </HeadSort></th>
                      <th>Свободно</th><th /><th>В резерве</th><th>Ед.изм</th><th /><th>Розничная цена</th><th>Артикул</th>
                    </tr>
                  </thead>
                  <tbody>
                    {items.map(it => (
                      <tr key={it.name}>
                        <td><NameCell>{it.kind === 'service' ? <Tools color="#555" /> : <Box marked={it.kind === 'marked'} />}{it.name}</NameCell></td>
                        <NumberCell>{it.free}</NumberCell>
                        <IconCell>{it.free && <Lens size={13} color="#6a6a6a" width={1.300} />}</IconCell>
                        <td />
                        <td>{it.free && 'шт'}</td>
                        <IconCell>{it.free && <CartSmall />}</IconCell>
                        <NumberCell>{it.price}</NumberCell>
                        <td />
                      </tr>
                    ))}
                  </tbody>
                </Grid>
              </GridBox>
              <GridPager>
                <PlainButton aria-label="В начало"><PagerIcon d="M1 1h8M5 2 8.500 6h-7z" /></PlainButton>
                <PlainButton aria-label="Назад"><PagerIcon d="M5 2 8.500 6h-7z" /></PlainButton>
                <PlainButton aria-label="Вперед"><PagerIcon d="M5 6 8.500 2h-7z" /></PlainButton>
                <PlainButton aria-label="В конец"><PagerIcon d="M1 7h8M5 6 8.500 2h-7z" /></PlainButton>
              </GridPager>
            </ListColumn>

            <Divider />

            <SideColumn>
              <Basket>
                <CartBig />
                <BasketLink href="#">Ваша корзина:<br />перетащите товары</BasketLink>
                <BasketOrder>
                  <SplitButton $width={134}>Заказ покупателя</SplitButton>
                  <SplitButton $width={29} aria-label="Выбрать"><Chevron color="#555" size={8} /></SplitButton>
                </BasketOrder>
              </Basket>
              <ModeRow>
                <RadioLabel><Radio name="mode" defaultChecked />Категории</RadioLabel>
                <RadioLabel><Radio name="mode" />Группы</RadioLabel>
                <Gap />
                <Button $width={31} aria-label="Меню списка"><MenuLines /></Button>
              </ModeRow>
              <CategoryList>
                <Category>&lt;Все категории&gt;</Category>
                <Category $selected><Dash $color="#5d88a0" />&lt;Без категории&gt;</Category>
                <Category><Dash $color="#8096b4" />Услуги МП</Category>
                <Category><Dash $color="#8096b4" />Упаковка</Category>
              </CategoryList>
              <ItemCard>
                <GroupTitle><Chevron />Автомобиль</GroupTitle>
                <AddImage>Добавить изображение</AddImage>
                <CardLinks>
                  <CardLinkRow>
                    <svg width="16" height="16" viewBox="0 0 16 16" fill="none" stroke="#5c5849" strokeWidth="1.500"><path d="M5.500 8V1.500M3.500 3.500 5.500 1.500 7.500 3.500M10 4v6.500M8 8.500 10 10.500 12 8.500" /></svg>
                    <a href="#">Аналоги не заданы</a>
                  </CardLinkRow>
                  <CardLinkRow>
                    <svg width="16" height="18" viewBox="0 0 16 18" fill="none" stroke="#6d6856" strokeWidth="1.400"><path d="M2.500 2h10v11h-10zM2.500 2.800h10M5 6h5M5 9h5" /></svg>
                    <a href="#">Нет сопутствующих товаров</a>
                  </CardLinkRow>
                </CardLinks>
              </ItemCard>
              <Collapse href="#">свернуть</Collapse>
            </SideColumn>
          </Columns>
        </Main>
      </Body>

      <Taskbar>
        <TaskButton $system aria-label="Пуск">
          <svg width="17" height="16" viewBox="0 0 17 16" fill="#fff"><path d="M0 2.300 7.500 1.200v6.300H0zM8.500 1 17 0v7.500H8.500zM0 8.500h7.500v6.300L0 13.700zM8.500 8.500H17V16l-8.500-1.100z" /></svg>
        </TaskButton>
        <TaskButton $system aria-label="Поиск">
          <svg width="17" height="17" viewBox="0 0 17 17" fill="none" stroke="#ddd" strokeWidth="1.200"><circle cx="10.500" cy="6" r="5.200" /><path d="M6.800 10 .8 16" /></svg>
        </TaskButton>
        <TaskButton $system aria-label="Представление задач">
          <svg width="17" height="15" viewBox="0 0 17 15" fill="none" stroke="#ccc" strokeWidth="1.100"><path d="M1 0v2h10V0M1 4.500h10v6H1zM1 15v-2h10v2M15.500 0v15M14.500 5h2" /></svg>
        </TaskButton>
        <Gap $size={4} />
        <TaskButton aria-label="Internet Explorer">
          <svg width="24" height="22" viewBox="0 0 24 22" fill="none"><path d="M6 12.500h13.500a7 7 0 1 0-1.500 4.500" stroke="#4db8ea" strokeWidth="3.600" /><path d="M3 20.500C-2 18 8 3 19 1.200c3-.5 3.500 1.300 2.500 4" stroke="#f2c230" strokeWidth="1.900" /></svg>
        </TaskButton>
        <TaskButton aria-label="Проводник">
          <svg width="23" height="18" viewBox="0 0 23 18"><path d="M1 1h8l1.500 2H22v14H1z" fill="#f6d77c" /><path d="M1 5h21v12H1z" fill="#fbe6a4" /><path d="M4.500 17v-7h14v7h-4v-3.500h-6V17z" fill="#45a6dc" /></svg>
        </TaskButton>
        <TaskButton aria-label="Chrome">
          <svg width="24" height="24" viewBox="0 0 24 24"><circle cx="12" cy="12" r="11.500" fill="#e33b2e" /><path d="M2 6.500A11.500 11.500 0 0 0 12 23.500L16.500 14z" fill="#2ea24c" /><path d="M12 23.500A11.500 11.500 0 0 0 22.500 7H12l5 8z" fill="#fbc921" /><circle cx="12" cy="12" r="5.500" fill="#fff" /><circle cx="12" cy="12" r="4.200" fill="#3b7de0" /></svg>
        </TaskButton>
        <TaskButton $active aria-label="1С:Предприятие">
          <AppTile>1C</AppTile><TileBadge>2</TileBadge>
        </TaskButton>
        <Tray>
          <svg width="17" height="16" viewBox="0 0 17 16" fill="none" stroke="#ddd" strokeWidth="1.200"><path d="M1 2.500 16 1v13H1z" /><circle cx="7.500" cy="7.500" r="3" /><circle cx="12.500" cy="11" r="4.500" fill="#dc2832" stroke="none" /><path d="M12.500 8.500v3M12.500 12.500v1" stroke="#fff" /></svg>
          <svg width="17" height="14" viewBox="0 0 17 14" fill="none" stroke="#ddd" strokeWidth="1.200"><path d="M1 1h4v4H1zM7 2h9v8H5V6M3 5v7M7 13h8M11 10v3" /></svg>
          <svg width="17" height="14" viewBox="0 0 17 14" fill="none" stroke="#ddd" strokeWidth="1.200"><path d="M1 5h2.500L7 1.500v11L3.500 9H1zM9.500 5v4M12 3.500q2 3.500 0 7M14 1.500q3.500 5.500 0 11" /></svg>
          <svg width="19" height="15" viewBox="-3 0 19 15" fill="none" stroke="#ddd" strokeWidth="1.300"><path d="M3 12 10 2q2-2 2 .5L6 11q-2 3-4 2.500T3 9.500q5-3 6-2t4-.5" /></svg>
          <Lang>РУС</Lang>
          <Clock>20:44<br />06.04.2026</Clock>
          <Gap $size={1} />
          <svg width="18" height="17" viewBox="0 0 18 17" fill="none" stroke="#e4e4e4" strokeWidth="1.200"><path d="M1 1h16v11.500h-5L9 16l-3-3.500H1z" /></svg>
          <PeekEdge />
        </Tray>
      </Taskbar>
    </Screen>

    <FormDialog />
    <Watermark>
      <div>Активация Windows</div>
      <p>Чтобы активировать Windows, перейдите в раздел "Параметры".</p>
    </Watermark>
    <Cursor x={1440} y={840} />
    <Cursor x={1493} y={919} />
  </>
);

export default App;
